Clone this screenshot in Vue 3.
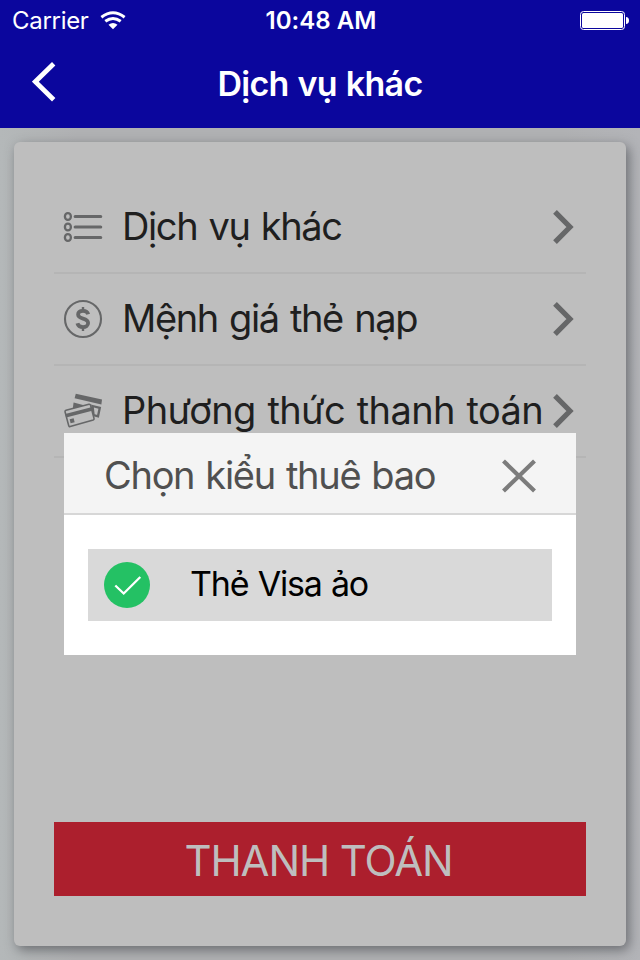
<script setup>
const rows = [
  { icon: 'list', label: 'Dịch vụ khác' },
  { icon: 'coin', label: 'Mệnh giá thẻ nạp' },
  { icon: 'cards', label: 'Phương thức thanh toán' },
]
</script>

<template>
  <div class="screen">
    <header class="header">
      <div class="status">
        <div class="carrier">
          <span class="carrier-name">Carrier</span>
          <svg class="wifi" width="26" height="19" viewBox="0 0 26 19">
            <g fill="none" stroke="#fff" stroke-width="3">
              <path d="M1.4 6.2Q13 -2.6 24.6 6.2" />
              <path d="M5.3 10.3Q13 4.6 20.7 10.3" />
            </g>
            <path d="M8.5 13.8Q13 10.4 17.5 13.8L13 18.3Z" fill="#fff" />
          </svg>
        </div>
        <span class="time">10:48 AM</span>
        <svg class="battery" width="50" height="20" viewBox="0 0 50 20">
          <rect x="0.5" y="0.5" width="44" height="18" rx="3" fill="none" stroke="#fff" />
          <rect x="2" y="2" width="41" height="15" rx="1.5" fill="#fff" />
          <path d="M46 6C48 6 49 7.5 49 9.5S48 13 46 13Z" fill="#fff" />
        </svg>
      </div>
      <nav class="nav">
        <svg class="back" width="24" height="42" viewBox="0 0 24 42">
          <path d="M21.7 2.8L3.3 20.7L21.7 38.8" fill="none" stroke="#fff" stroke-width="4.8" />
        </svg>
        <h1 class="title">Dịch vụ khác</h1>
      </nav>
    </header>

    <main class="body">
      <section class="card">
        <ul class="rows">
          <li v-for="row in rows" :key="row.icon" class="row">
            <svg class="row-icon" width="40" height="40" viewBox="0 0 40 40">
              <g v-if="row.icon === 'list'" fill="none" stroke="#666768">
                <g stroke-width="2.3">
                  <ellipse cx="4.9" cy="9.5" rx="3" ry="3.4" />
                  <ellipse cx="4.9" cy="20" rx="3" ry="3.4" />
                  <ellipse cx="4.9" cy="30.5" rx="3" ry="3.4" />
                </g>
                <path d="M12.2 9.5H37.7M12.2 20H37.7M12.2 30.5H37.7" stroke-width="3.2" stroke-linecap="round" />
              </g>
              <g v-else-if="row.icon === 'coin'" fill="none" stroke="#666768">
                <circle cx="20" cy="20" r="18" stroke-width="2.1" />
                <path d="M25.2 15.3C24.6 12.9 22.8 11.8 20 11.8C17 11.8 15.1 13.3 15.1 15.6C15.1 21.1 25.1 18 25.1 24C25.1 26.4 23 28.1 20 28.1C17 28.1 15 26.6 14.4 24.3" stroke-width="3.8" />
                <path d="M20 8V13M20 27V32" stroke-width="2.4" />
              </g>
              <g v-else stroke="#666768">
                <path d="M12.8 2.8L39 8.6L38.4 13.6L11.6 7.3Z" fill="#666768" stroke="none" />
                <path d="M10.6 11.6L26.7 15.7L9.6 19Z" fill="#666768" stroke="none" />
                <path d="M29.5 15L36.8 16.8L35 25.3L30.6 24.2Z" fill="none" stroke-width="2.3" />
                <path d="M2 20.7Q2 19.6 3 19.3L25.9 13.3Q27.2 13 27.6 14.2L31 27.4Q31.3 28.6 30.2 29L7.2 35.5Q6 35.9 5.7 34.6Z" fill="#bebebe" stroke-width="1.6" />
                <path d="M2.7 24.8L28.7 17.9" fill="none" stroke-width="3.6" />
                <path d="M6.6 28.2L10.6 27.2L11.6 31.2L7.6 32.2Z" fill="#666768" stroke="none" />
              </g>
            </svg>
            <span class="row-label" :class="'label-' + row.icon">{{ row.label }}</span>
            <svg class="chevron" width="22" height="36" viewBox="0 0 22 36">
              <path d="M3 2.9L18 18L3 33.1" fill="none" stroke="#666768" stroke-width="5.2" />
            </svg>
          </li>
        </ul>
        <button class="pay">THANH TOÁN</button>
      </section>
    </main>

    <section class="dialog">
      <div class="dialog-head">
        <h2 class="dialog-title">Chọn kiểu thuê bao</h2>
        <svg class="close" width="34" height="34" viewBox="0 0 34 34">
          <path d="M1.5 2L32.5 32M32.5 2L1.5 32" stroke="#7c7c7c" stroke-width="4.2" />
        </svg>
      </div>
      <div class="dialog-body">
        <div class="option">
          <svg class="check" width="46" height="46" viewBox="0 0 46 46">
            <circle cx="23" cy="23" r="23" fill="#24c164" />
            <path d="M11.3 23.5L19.7 31.5L36.3 15" fill="none" stroke="#fff" stroke-width="2.3" />
          </svg>
          <span class="option-label">Thẻ Visa ảo</span>
        </div>
      </div>
    </section>
  </div>
</template>

<style>
body {
  margin: 0;
}
</style>

<style scoped>
.screen {
  position: relative;
  display: flex;
  flex-direction: column;
  width: 640px;
  height: 960px;
  overflow: hidden;
  font-family: Inter, 'Liberation Sans', sans-serif;
  background: #b4b7b8;
}
.header {
  flex: none;
  height: 128px;
  background: #0b069d;
  color: #fff;
}
.status {
  display: grid;
  grid-template-columns: 1fr auto 1fr;
  align-items: center;
  height: 40px;
  padding: 0 10px 0 12px;
}
.carrier {
  display: flex;
  align-items: center;
  gap: 11px;
}
.carrier-name {
  font-size: 24px;
  letter-spacing: -0.3px;
}
.time {
  font-size: 24px;
  font-weight: 600;
  letter-spacing: 0.05px;
}
.battery {
  justify-self: end;
  margin-top: 1px;
}
.nav {
  display: grid;
  grid-template-columns: 24px 1fr 24px;
  align-items: center;
  height: 88px;
  padding: 0 32px;
}
.back {
  margin-bottom: 4px;
}
.title {
  margin: 0 0 2px;
  text-align: center;
  font-size: 34px;
  font-weight: 560;
  letter-spacing: -0.7px;
  word-spacing: 1px;
}
.body {
  flex: 1;
  display: flex;
  padding: 14px;
  background: linear-gradient(90deg, #b4b8b9, #b0b1b3 12%, #b0b1b3 88%, #b3b4b8);
}
.card {
  flex: 1;
  display: flex;
  flex-direction: column;
  justify-content: space-between;
  padding: 40px 40px 50px;
  border-radius: 6px;
  background: #bebebe;
  box-shadow: 3px 4px 12px rgba(60, 64, 68, 0.6);
}
.rows {
  margin: 0;
  padding: 0;
  list-style: none;
}
.row {
  display: flex;
  align-items: center;
  box-sizing: border-box;
  height: 92px;
  padding: 0 12px 0 9px;
  border-bottom: 2px solid #b5b5b5;
}
.row-icon {
  flex: none;
}
.row-label {
  flex: 1;
  min-width: 0;
  margin: -2px 0 0 19px;
  color: #1f1f1f;
  font-size: 38px;
  letter-spacing: -1.4px;
  word-spacing: 2px;
  white-space: nowrap;
}
.label-cards {
  letter-spacing: -0.6px;
  word-spacing: 1.5px;
}
.chevron {
  flex: none;
}
.pay {
  height: 74px;
  padding: 2px 3px 0 0;
  border: 0;
  background: #ac1f2d;
  color: #bebebe;
  font: 400 42px Inter, 'Liberation Sans', sans-serif;
  letter-spacing: -1.1px;
}
.dialog {
  position: absolute;
  left: 64px;
  top: 433px;
  width: 512px;
  height: 222px;
  background: #fff;
}
.dialog-head {
  display: flex;
  align-items: center;
  justify-content: space-between;
  box-sizing: border-box;
  height: 82px;
  padding: 6px 40px 0;
  border-bottom: 2px solid #d7d7d7;
  background: #f4f4f4;
}
.dialog-title {
  margin: 0 0 2px;
  color: #505050;
  font-size: 38px;
  font-weight: 400;
  letter-spacing: -1.3px;
  word-spacing: 1.7px;
}
.dialog-body {
  padding: 34px 24px;
}
.option {
  display: flex;
  align-items: center;
  gap: 40px;
  height: 72px;
  padding: 0 16px;
  background: #d9d9d9;
}
.option-label {
  margin-top: -3px;
  color: #000;
  font-size: 34px;
  letter-spacing: -1.2px;
  word-spacing: 1px;
}
</style>
